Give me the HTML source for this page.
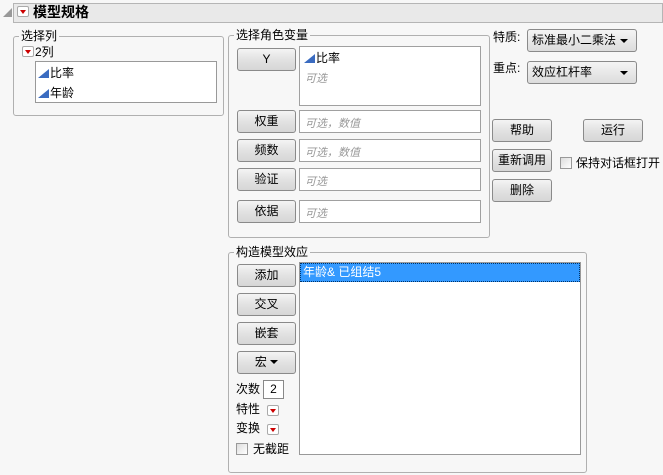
<!DOCTYPE html><html><head><meta charset="utf-8"><style>
*{box-sizing:border-box;margin:0;padding:0}
body{width:663px;height:475px;background:#f7f7f7;font-family:"Liberation Sans","Noto Sans CJK SC",sans-serif;font-size:12px;color:#000;position:relative;overflow:hidden}
.a{position:absolute}
.grp{position:absolute;border:1px solid #b0b0b0;border-radius:3px}
.lg{position:absolute;background:#f7f7f7;padding:0 2px;font-size:12px;line-height:14px;top:-8px;left:5px}
.btn{position:absolute;border:1px solid #8a8a8a;border-radius:3px;background:linear-gradient(#f4f4f4,#e2e2e2 50%,#d6d6d6);text-align:center;line-height:21px;font-size:12px}
.fld{position:absolute;border:1px solid #a0a0a0;background:#fff}
.ph{color:#999;font-style:italic;font-size:11px;position:absolute;left:5px}
.rd{position:absolute;width:12px;height:11px;border:1px solid #aaa;border-radius:2px;background:#fff}
.rd:after{content:"";position:absolute;left:2px;top:3px;border-left:3px solid transparent;border-right:3px solid transparent;border-top:4px solid #c00}
.tri{display:inline-block;width:0;height:0;border-left:11px solid transparent;border-bottom:9px solid #3a6bc0;vertical-align:-1px;margin-right:1px}
.cb{position:absolute;width:12px;height:12px;border:1px solid #999;background:linear-gradient(135deg,#ddd,#fff)}
.dd{position:absolute;border:1px solid #8a8a8a;border-radius:3px;background:linear-gradient(#f4f4f4,#dcdcdc);line-height:21px;padding-left:4px}
.dd:after{content:"";position:absolute;right:8px;top:9px;border-left:4px solid transparent;border-right:4px solid transparent;border-top:4px solid #000}
</style></head><body>
<div class="a" style="left:3px;top:8px;width:0;height:0;border-left:9px solid transparent;border-bottom:9px solid #999"></div>
<div class="a" style="left:13px;top:3px;width:650px;height:20px;background:#e9e9e9;border:1px solid #b5b5b5"></div>
<div class="rd" style="left:17px;top:6px"></div>
<div class="a" style="left:33px;top:3px;font-weight:bold;font-size:14px;line-height:19px">模型规格</div>

<div class="grp" style="left:13px;top:36px;width:211px;height:80px"><div class="lg">选择列</div></div>
<div class="rd" style="left:22px;top:46px"></div>
<div class="a" style="left:35px;top:45px;line-height:14px">2列</div>
<div class="fld" style="left:35px;top:61px;width:182px;height:42px;border-color:#999"></div>
<div class="a" style="left:38px;top:65px;line-height:16px"><span class="tri"></span>比率</div>
<div class="a" style="left:38px;top:85px;line-height:16px"><span class="tri"></span>年龄</div>

<div class="grp" style="left:228px;top:35px;width:262px;height:203px"><div class="lg">选择角色变量</div></div>
<div class="btn" style="left:237px;top:48px;width:59px;height:23px">Y</div>
<div class="fld" style="left:299px;top:46px;width:182px;height:60px"></div>
<div class="a" style="left:304px;top:50px;line-height:16px"><span class="tri"></span>比率</div>
<div class="ph" style="left:305px;top:70px">可选</div>
<div class="btn" style="left:237px;top:110px;width:59px;height:23px">权重</div>
<div class="fld" style="left:299px;top:110px;width:182px;height:23px"><span class="ph" style="top:4px">可选，数值</span></div>
<div class="btn" style="left:237px;top:139px;width:59px;height:23px">频数</div>
<div class="fld" style="left:299px;top:139px;width:182px;height:23px"><span class="ph" style="top:4px">可选，数值</span></div>
<div class="btn" style="left:237px;top:168px;width:59px;height:23px">验证</div>
<div class="fld" style="left:299px;top:168px;width:182px;height:23px"><span class="ph" style="top:4px">可选</span></div>
<div class="btn" style="left:237px;top:200px;width:59px;height:23px">依据</div>
<div class="fld" style="left:299px;top:200px;width:182px;height:23px"><span class="ph" style="top:4px">可选</span></div>

<div class="a" style="left:493px;top:29px;line-height:16px">特质:</div>
<div class="dd" style="left:527px;top:29px;width:110px;height:23px">标准最小二乘法</div>
<div class="a" style="left:493px;top:60px;line-height:16px">重点:</div>
<div class="dd" style="left:527px;top:61px;width:110px;height:23px">效应杠杆率</div>
<div class="btn" style="left:492px;top:119px;width:60px;height:23px">帮助</div>
<div class="btn" style="left:583px;top:119px;width:60px;height:23px">运行</div>
<div class="btn" style="left:492px;top:149px;width:60px;height:23px">重新调用</div>
<div class="cb" style="left:560px;top:157px"></div>
<div class="a" style="left:576px;top:155px;line-height:16px">保持对话框打开</div>
<div class="btn" style="left:492px;top:179px;width:60px;height:23px">删除</div>

<div class="grp" style="left:228px;top:252px;width:359px;height:221px"><div class="lg">构造模型效应</div></div>
<div class="btn" style="left:237px;top:264px;width:59px;height:23px">添加</div>
<div class="btn" style="left:237px;top:293px;width:59px;height:23px">交叉</div>
<div class="btn" style="left:237px;top:322px;width:59px;height:23px">嵌套</div>
<div class="btn" style="left:237px;top:351px;width:59px;height:23px">宏 <span style="display:inline-block;border-left:4px solid transparent;border-right:4px solid transparent;border-top:4px solid #000;vertical-align:2px"></span></div>
<div class="a" style="left:236px;top:381px;line-height:16px">次数</div>
<div class="fld" style="left:263px;top:380px;width:21px;height:19px;border-color:#888;text-align:center;line-height:17px">2</div>
<div class="a" style="left:236px;top:401px;line-height:16px">特性</div>
<div class="rd" style="left:267px;top:405px"></div>
<div class="a" style="left:236px;top:420px;line-height:16px">变换</div>
<div class="rd" style="left:267px;top:424px"></div>
<div class="cb" style="left:236px;top:443px"></div>
<div class="a" style="left:253px;top:441px;line-height:16px">无截距</div>
<div class="fld" style="left:299px;top:262px;width:282px;height:193px;border-color:#999"></div>
<div class="a" style="left:300px;top:263px;width:280px;height:19px;background:#3399ff;border:1px dotted #036;color:#fff;line-height:17px;padding-left:2px">年龄&amp; 已组结5</div>
</body></html>
